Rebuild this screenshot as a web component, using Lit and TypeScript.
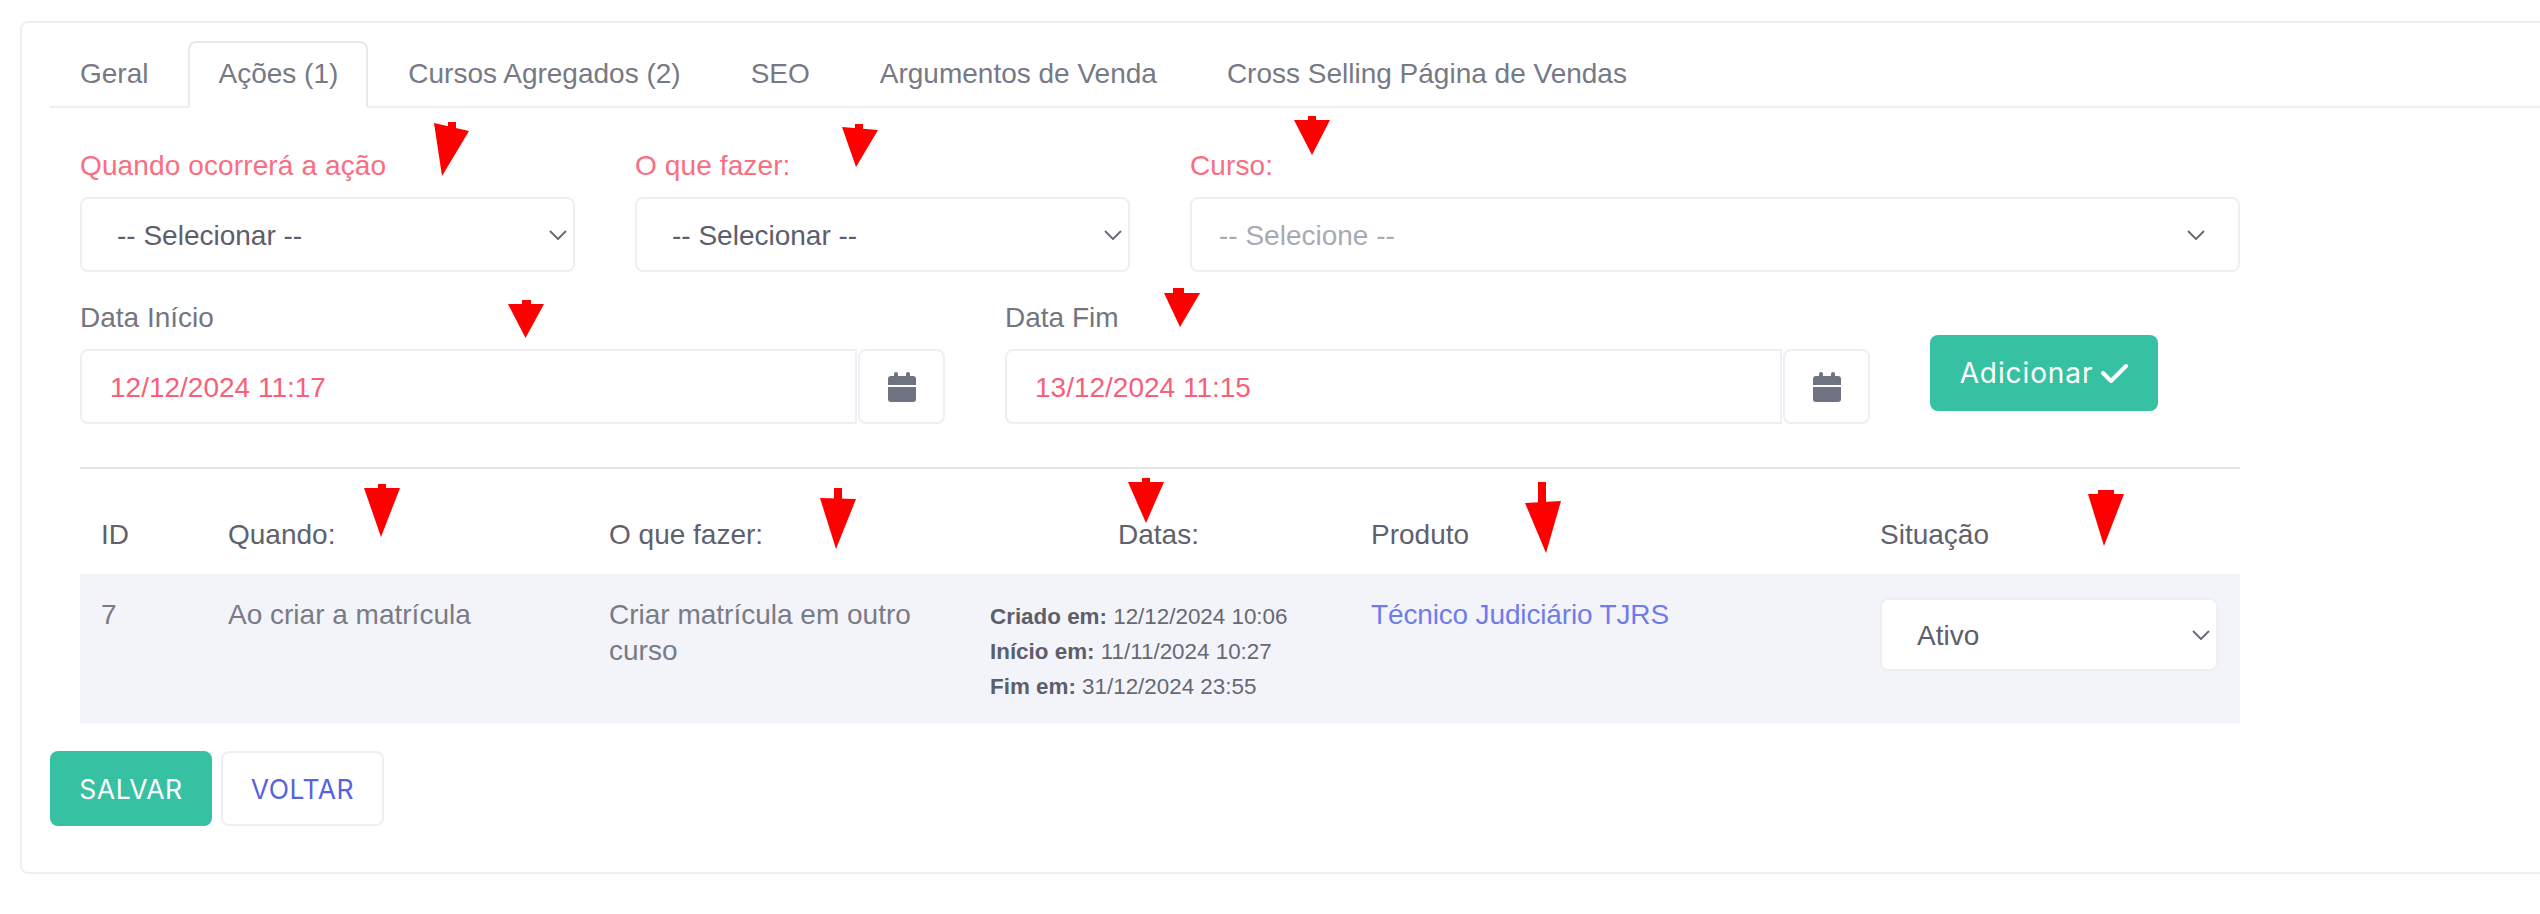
import { LitElement, html, css, svg } from "lit";
import { customElement } from "lit/decorators.js";

type Arrow = { stem: [number, number, number, number]; head: string };
const ARROWS: Arrow[] = [
  { stem: [448, 122, 8, 8], head: "434,123 469,131 442,176" },
  { stem: [855, 124, 8, 6], head: "842,127 878,130 856,167" },
  { stem: [1308, 116, 8, 6], head: "1294,120 1330,120 1312,155" },
  { stem: [522, 300, 9, 6], head: "508,304 544,304 525.5,338" },
  { stem: [1173, 288, 11, 7], head: "1164,293 1200,293 1180,327" },
  { stem: [378, 484, 8, 6], head: "364,488 400,488 381,537" },
  { stem: [834, 488, 8, 12], head: "820,498 856,499 836,549" },
  { stem: [1142, 478, 8, 6], head: "1128,482 1164,482 1146,523" },
  { stem: [1538, 482, 8, 22], head: "1525,503 1561,501 1546,553" },
  { stem: [2098, 490, 16, 6], head: "2088,494 2124,494 2104,546" },
];

const chevron = html`<svg class="chev" width="18" height="10" viewBox="0 0 18 10"><path d="M1 1l8 8 8-8" fill="none" stroke="currentColor" stroke-width="2"/></svg>`;
const calendar = html`<svg width="28" height="30" viewBox="0 0 28 30" fill="#6f7280"><rect x="6" y="0" width="4" height="7" rx="2"/><rect x="18" y="0" width="4" height="7" rx="2"/><path d="M3 4h22a3 3 0 0 1 3 3v6H0V7a3 3 0 0 1 3-3z"/><path d="M0 15h28v12a3 3 0 0 1-3 3H3a3 3 0 0 1-3-3z"/></svg>`;

@customElement("app-root")
export class AppRoot extends LitElement {
  static styles = css`
    :host { display: block; }
    .page {
      position: relative; width: 2540px; height: 914px; overflow: hidden; box-sizing: border-box;
      padding: 21px 0 0 20px; background: #fff;
      font: 28px/36.4px "Liberation Sans", Arial, sans-serif; color: #62646f;
    }
    .card {
      box-sizing: border-box; width: 2530px; height: 853px; padding: 18px 0 0 28px;
      border: 2px solid #eeeff4; border-radius: 8px;
    }
    .tabs { display: flex; gap: 10px; height: 65px; border-bottom: 2px solid #eeeff4; }
    .tab {
      box-sizing: border-box; height: 67px; padding: 0 28px; display: flex; align-items: center;
      border: 2px solid transparent; border-radius: 8px 8px 0 0; color: #777985;
    }
    .tab.active { border-color: #e8e9ef; border-bottom-color: #fff; }
    .grid { display: grid; grid-template-columns: repeat(12, 185px); width: 2220px; padding-top: 40px; row-gap: 28px; }
    .col { padding: 0 30px; min-width: 0; }
    .c3 { grid-column: span 3; }
    .c6 { grid-column: span 6; }
    .c5 { grid-column: span 5; }
    .c2 { grid-column: span 2; }
    label { display: block; margin-bottom: 12.6px; color: #74767f; }
    label.req { color: #fa6d82; letter-spacing: 0.12px; }
    .field {
      box-sizing: border-box; height: 75px; display: flex; align-items: center; justify-content: space-between;
      border: 2px solid #eeeff4; border-radius: 8px; background: #fff; color: #5c5e6b;
    }
    .field span { padding-top: 3px; }
    .sel { padding: 0 6px 0 35px; }
    .sel .chev { color: #6b6d78; }
    .sel.wide { padding: 0 33px 0 27px; color: #a8aab3; }
    .group { display: flex; }
    .group .input { flex: 1; padding: 0 28px; border-radius: 8px 0 0 8px; color: #f8607a; }
    .addon {
      box-sizing: border-box; width: 87px; height: 75px; display: flex; align-items: center; justify-content: center;
      border: 2px solid #eeeff4; border-radius: 8px; margin-left: 1px;
    }
    .add {
      display: flex; align-items: center; justify-content: center; gap: 8px; width: 228px; height: 76px; margin-top: 35px;
      background: #37c1a3; color: #fff; border-radius: 8px; font: 28px "Inter", sans-serif; letter-spacing: 0.9px;
    }
    .table { width: 2160px; margin: 43px 0 0 30px; border-top: 2px solid #e4e5e8; }
    .cols { display: grid; grid-template-columns: 126px 381px 381px 381px 509px 382px; }
    .cols > div { padding: 0 22px; min-width: 0; }
    .cols > div:first-child { padding-left: 21px; }
    .thead { height: 105px; align-items: end; color: #5f616d; }
    .thead > div { padding-bottom: 21px; }
    .center { text-align: center; }
    .row { height: 149px; background: #f3f4f9; color: #797b87; }
    .row > div { padding-top: 23px; }
    .row .dates { padding-top: 25px; padding-right: 0; font-size: 22.4px; line-height: 35px; color: #666874; white-space: nowrap; }
    .dates b { font-weight: 700; color: #5c5e6b; }
    .link { color: #6f7cea; letter-spacing: -0.15px; }
    .row .status { display: block; padding: 24px 22px 0 22px; }
    .status .field { height: 73px; }
    .actions { display: flex; gap: 9px; margin-top: 28px; }
    .btn {
      box-sizing: border-box; width: 162px; height: 75px; display: flex; align-items: center; justify-content: center;
      border-radius: 8px; font: 26.5px "Inter", sans-serif; background: #37c1a3; color: #fff; letter-spacing: 0.5px;
    }
    .btn.ghost { width: 163px; background: #fff; color: #5663dc; border: 2px solid #eeeff4; }
    .arrows { position: absolute; left: 0; top: 0; pointer-events: none; }
  `;

  render() {
    return html`<div class="page">
      <div class="card">
        <div class="tabs">
          ${["Geral", "Ações (1)", "Cursos Agregados (2)", "SEO", "Argumentos de Venda", "Cross Selling Página de Vendas"].map(
            (t, i) => html`<div class="tab ${i === 1 ? "active" : ""}">${t}</div>`
          )}
        </div>
        <div class="grid">
          <div class="col c3"><label class="req">Quando ocorrerá a ação</label><div class="field sel"><span>-- Selecionar --</span>${chevron}</div></div>
          <div class="col c3"><label class="req">O que fazer:</label><div class="field sel"><span>-- Selecionar --</span>${chevron}</div></div>
          <div class="col c6"><label class="req">Curso:</label><div class="field sel wide"><span>-- Selecione --</span>${chevron}</div></div>
          <div class="col c5"><label>Data Início</label><div class="group"><div class="field input"><span>12/12/2024 11:17</span></div><div class="addon">${calendar}</div></div></div>
          <div class="col c5"><label>Data Fim</label><div class="group"><div class="field input"><span>13/12/2024 11:15</span></div><div class="addon">${calendar}</div></div></div>
          <div class="col c2"><div class="add"><span>Adicionar</span><svg width="27" height="20" viewBox="0 0 27 20"><path d="M2 10l8 8L25 3" fill="none" stroke="#fff" stroke-width="4" stroke-linecap="round" stroke-linejoin="round"/></svg></div></div>
        </div>
        <div class="table">
          <div class="cols thead">
            <div>ID</div><div>Quando:</div><div>O que fazer:</div><div class="center">Datas:</div><div>Produto</div><div>Situação</div>
          </div>
          <div class="cols row">
            <div>7</div>
            <div>Ao criar a matrícula</div>
            <div>Criar matrícula em outro curso</div>
            <div class="dates"><b>Criado em:</b> 12/12/2024 10:06<br /><b>Início em:</b> 11/11/2024 10:27<br /><b>Fim em:</b> 31/12/2024 23:55</div>
            <div class="link">Técnico Judiciário TJRS</div>
            <div class="status"><div class="field sel"><span>Ativo</span>${chevron}</div></div>
          </div>
        </div>
        <div class="actions"><div class="btn">SALVAR</div><div class="btn ghost">VOLTAR</div></div>
      </div>
      <svg class="arrows" width="2540" height="914" viewBox="0 0 2540 914" fill="#ff0000">
        ${ARROWS.map(
          (a) => svg`<rect x=${a.stem[0]} y=${a.stem[1]} width=${a.stem[2]} height=${a.stem[3]}></rect><polygon points=${a.head}></polygon>`
        )}
      </svg>
    </div>`;
  }
}
